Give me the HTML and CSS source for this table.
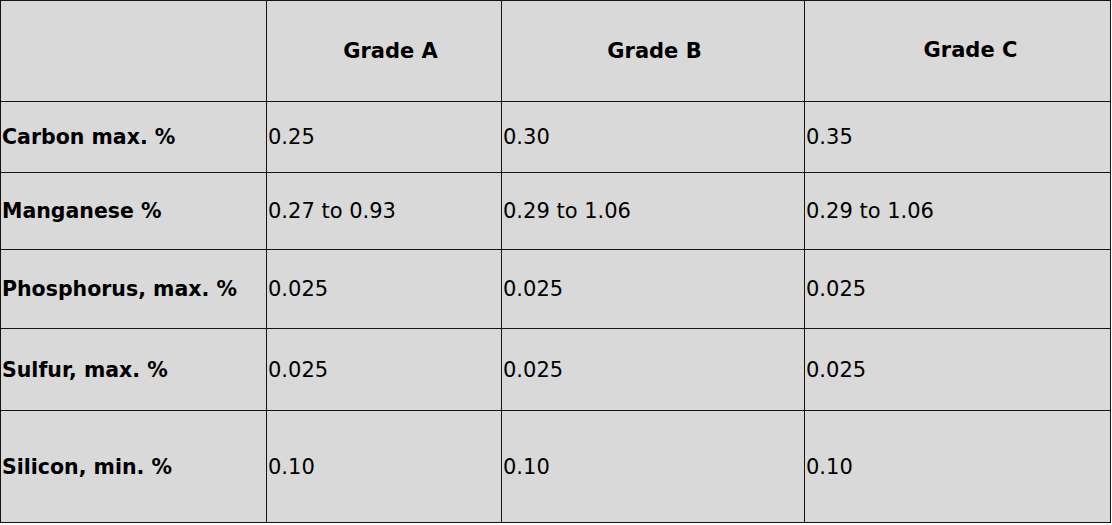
FILE: index.html
```html
<!DOCTYPE html>
<html>
<head>
<meta charset="utf-8">
<link rel="stylesheet" href="styles.css">
</head>
<body>
<table class="spec">
  <colgroup>
    <col class="c0"><col class="c1"><col class="c2"><col class="c3">
  </colgroup>
  <thead>
    <tr class="r-head">
      <th></th>
      <th class="h-a">Grade A</th>
      <th class="h-b">Grade B</th>
      <th class="h-c">Grade C</th>
    </tr>
  </thead>
  <tbody>
    <tr class="r1">
      <td class="lbl">Carbon max. %</td><td>0.25</td><td>0.30</td><td>0.35</td>
    </tr>
    <tr class="r2">
      <td class="lbl">Manganese %</td><td>0.27 to 0.93</td><td>0.29 to 1.06</td><td>0.29 to 1.06</td>
    </tr>
    <tr class="r3">
      <td class="lbl">Phosphorus, max. %</td><td>0.025</td><td>0.025</td><td>0.025</td>
    </tr>
    <tr class="r4">
      <td class="lbl">Sulfur, max. %</td><td>0.025</td><td>0.025</td><td>0.025</td>
    </tr>
    <tr class="r5">
      <td class="lbl">Silicon, min. %</td><td>0.10</td><td>0.10</td><td>0.10</td>
    </tr>
  </tbody>
</table>
</body>
</html>
```
FILE: styles.css
```css
html, body {
  margin: 0;
  padding: 0;
  background: #ffffff;
}
.spec {
  border-collapse: collapse;
  table-layout: fixed;
  width: 1111px;
  background: #d9d9d9;
  font-family: "DejaVu Sans", sans-serif;
  font-size: 21px;
  color: #000;
}
.c0 { width: 266px; }
.c1 { width: 235px; }
.c2 { width: 303px; }
.c3 { width: 306px; }
.spec th, .spec td {
  border: 1px solid #141414;
  padding: 0 0 0 1px;
  vertical-align: middle;
  text-align: left;
  white-space: nowrap;
  font-weight: normal;
}
.spec th {
  font-weight: bold;
  text-align: center;
}
.spec .h-a { padding-left: 13px; }
.spec .h-b { padding-left: 3px; }
.spec .h-c { padding-left: 26px; padding-bottom: 3px; }
.spec td.lbl {
  font-weight: bold;
  font-size: 20.5px;
}
.r-head { height: 101px; }
.r1 { height: 71px; }
.r2 { height: 77px; }
.r3 { height: 79px; }
.r4 { height: 82px; }
.r5 { height: 112px; }
```
